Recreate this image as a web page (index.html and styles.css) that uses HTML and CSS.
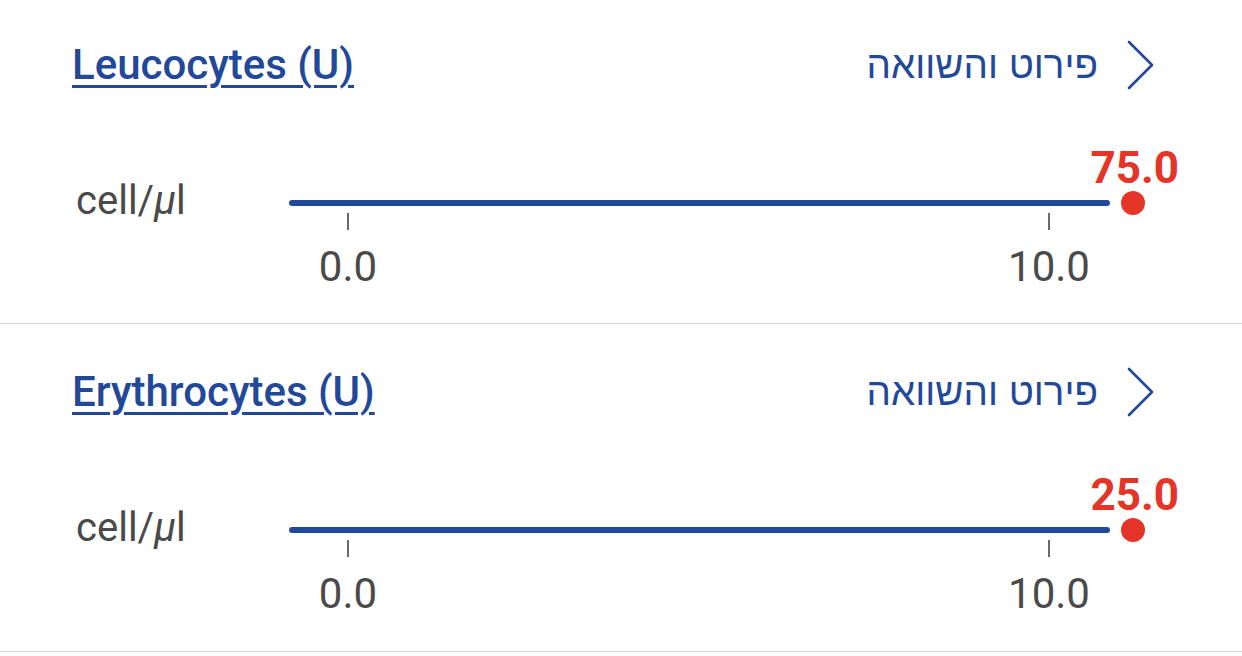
FILE: index.html
```html
<!DOCTYPE html>
<html lang="en">
<head>
<meta charset="utf-8">
<link rel="stylesheet" href="styles.css">
</head>
<body>
<div class="list">
  <section class="item">
    <div class="head">
      <a class="title" href="#">Leucocytes (U)</a>
      <a class="more" href="#">
        <span class="more-text" dir="rtl" lang="he">פירוט והשוואה</span>
        <svg class="chev" width="30" height="52" viewBox="0 0 30 52"><path d="M3 3 L26 26 L3 49" fill="none" stroke="#22489a" stroke-width="2.6" stroke-linecap="round" stroke-linejoin="round"/></svg>
      </a>
    </div>
    <div class="chart">
      <div class="unit">cell/<i>μ</i>l</div>
      <div class="track">
        <div class="bar"></div>
        <div class="marker"><span class="val">75.0</span></div>
        <div class="ticks">
          <div class="tick"><span class="tline"></span><span class="tlabel">0.0</span></div>
          <div class="tick"><span class="tline"></span><span class="tlabel">10.0</span></div>
        </div>
      </div>
    </div>
  </section>
  <section class="item">
    <div class="head">
      <a class="title" href="#">Erythrocytes (U)</a>
      <a class="more" href="#">
        <span class="more-text" dir="rtl" lang="he">פירוט והשוואה</span>
        <svg class="chev" width="30" height="52" viewBox="0 0 30 52"><path d="M3 3 L26 26 L3 49" fill="none" stroke="#22489a" stroke-width="2.6" stroke-linecap="round" stroke-linejoin="round"/></svg>
      </a>
    </div>
    <div class="chart">
      <div class="unit">cell/<i>μ</i>l</div>
      <div class="track">
        <div class="bar"></div>
        <div class="marker"><span class="val">25.0</span></div>
        <div class="ticks">
          <div class="tick"><span class="tline"></span><span class="tlabel">0.0</span></div>
          <div class="tick"><span class="tline"></span><span class="tlabel">10.0</span></div>
        </div>
      </div>
    </div>
  </section>
</div>
</body>
</html>
```

FILE: styles.css
```css
* { box-sizing: border-box; }
html, body {
  margin: 0;
  padding: 0;
  background: #ffffff;
}
body {
  font-family: Roboto, "Liberation Sans", "DejaVu Sans", sans-serif;
  color: #4a4a4a;
  width: 1242px;
  height: 656px;
  overflow: hidden;
}
.item {
  height: 324px;
  padding-top: 30px;
  border-bottom: 1px solid #d6d8d8;
}
.item + .item {
  height: 328px;
  padding-top: 33px;
}
.head {
  display: flex;
  align-items: center;
  justify-content: space-between;
  height: 70px;
  padding: 0 86px 0 72px;
}
.title {
  font-size: 42px;
  line-height: 44px;
  font-weight: 500;
  color: #22489a;
  text-decoration: underline;
  text-decoration-thickness: 3px;
  text-underline-offset: 6px;
}
.more {
  display: flex;
  align-items: center;
  gap: 28px;
  color: #22489a;
  text-decoration: none;
}
.more-text {
  font-family: "Liberation Sans", "DejaVu Sans", sans-serif;
  font-size: 38.6px;
  line-height: 44px;
}
.chev { display: block; }
.chart {
  display: flex;
  align-items: flex-start;
  margin-top: 100px;
  padding-left: 76px;
}
.unit {
  width: 213px;
  margin-top: -19px;
  font-size: 40px;
  line-height: 40px;
  color: #4a4a4a;
}
.unit i { font-style: italic; }
.track {
  position: relative;
  width: 821px;
}
.bar {
  height: 6px;
  border-radius: 3px;
  background: #22489a;
}
.marker {
  position: absolute;
  left: calc(100% + 11px);
  top: -9px;
  width: 24px;
  height: 24px;
  border-radius: 50%;
  background: #e53428;
}
.val {
  position: absolute;
  right: -34px;
  bottom: calc(100% - 1px);
  font-size: 44px;
  line-height: 48px;
  font-weight: 700;
  color: #e53428;
}
.ticks {
  display: flex;
  justify-content: space-between;
  padding: 0 61px 0 59px;
  margin-top: 7px;
}
.tick {
  width: 0;
  display: flex;
  flex-direction: column;
  align-items: center;
}
.tline {
  width: 2px;
  height: 17px;
  background: #6a6a6a;
}
.tlabel {
  margin-top: 13px;
  font-size: 42px;
  line-height: 48px;
  color: #4a4a4a;
  white-space: nowrap;
}
```
